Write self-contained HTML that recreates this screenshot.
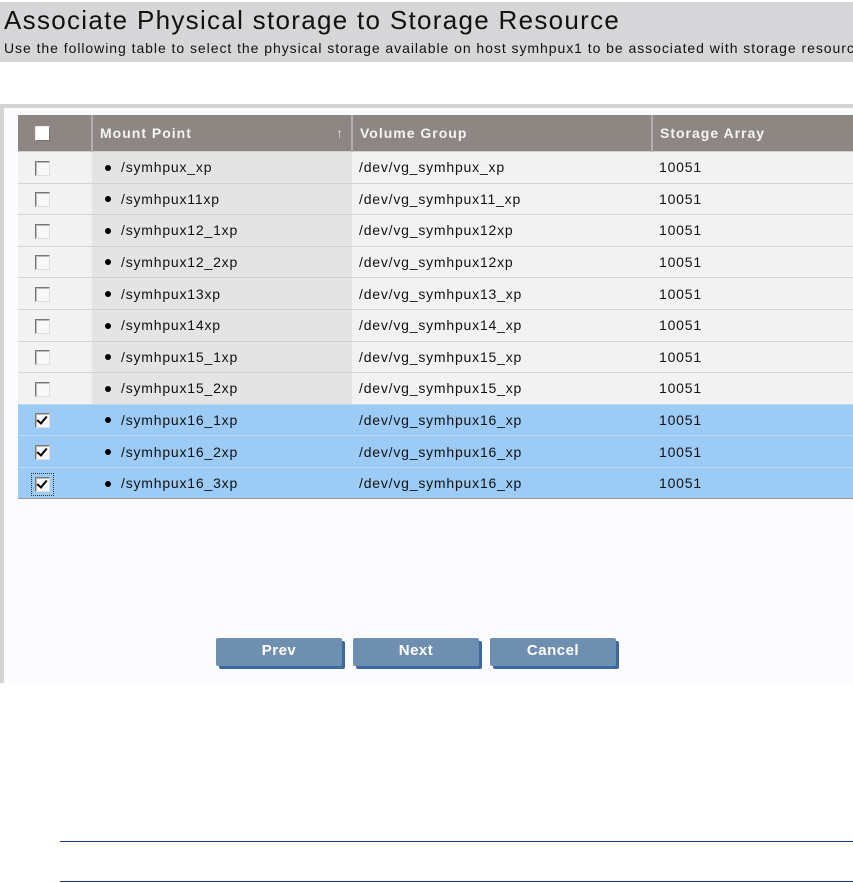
<!DOCTYPE html>
<html><head><style>
body{margin:0;width:853px;height:883px;background:#fff;font-family:"Liberation Sans",Arial,sans-serif;position:relative;overflow:hidden}
.hdr{position:absolute;left:0;top:2px;width:853px;height:60px;background:#d6d6d8;overflow:hidden}
.hdr h1{position:absolute;left:4px;top:3px;margin:0;font-weight:normal;font-size:26px;letter-spacing:1.3px;color:#111;white-space:nowrap}
.hdr p{position:absolute;left:4px;top:38px;margin:0;font-size:14px;letter-spacing:0.95px;color:#111;white-space:nowrap}
.panel{position:absolute;left:0;top:104px;width:853px;height:579px;background:#fcfbfd;border-top:4px solid #d4d4d4;border-left:4px solid #d4d4d4;box-sizing:border-box}
table{position:absolute;left:18px;top:115px;border-collapse:collapse;table-layout:fixed;width:840px;font-size:14px;letter-spacing:0.8px;color:#111}
th{background:#8d8682;color:#f4f4f4;text-align:left;font-size:14px;letter-spacing:1px;height:36px;padding:0 7px;border-left:2px solid #b5b0ad;white-space:nowrap}
th:first-child{border-left:none}
td{height:31.6px;padding:0 7px;border-top:1px solid #d2d2d2;background:#f2f2f2;box-sizing:border-box;white-space:nowrap}
td.m{background:#e4e4e4}
tr.s td{background:#9ccbf5;border-top:1px solid #bcd6ee}
.cb{display:inline-block;width:13px;height:13px;border:1px solid #777;border-right-color:#ddd;border-bottom-color:#ddd;background:#f8f8f8;vertical-align:middle;margin-left:10px;position:relative;box-shadow:inset 1px 1px 0 #bbb}
.cb.k::after{content:"";position:absolute;left:3px;top:0px;width:4px;height:8px;border:solid #000;border-width:0 2px 2px 0;transform:rotate(40deg)}
.dot{display:inline-block;width:6px;height:6px;border-radius:50%;background:#000;margin:0 10px 2px 6px;vertical-align:middle}
.btn{position:absolute;top:638px;width:126px;height:28px;background:#6f8fb0;color:#fff;font-weight:bold;font-size:15px;letter-spacing:0.5px;text-align:center;line-height:26px;box-shadow:3px 3px 0 #3a6aa0;border-radius:2px}
.ln{position:absolute;left:60px;width:793px;height:1px;background:#1a3f8f}
</style></head><body>
<div class="hdr"><h1>Associate Physical storage to Storage Resource</h1><p>Use the following table to select the physical storage available on host symhpux1 to be associated with storage resource</p></div>
<div class="panel"></div>
<table>
<colgroup><col style="width:74px"><col style="width:260px"><col style="width:300px"><col></colgroup>
<tr><th><span class="cb" style="background:#fff;border-color:#eee #777 #777 #eee;box-shadow:none"></span></th><th>Mount Point<span style="float:right;color:#ddd">↑</span></th><th>Volume Group</th><th>Storage Array</th></tr>
<tr><td><span class="cb"></span></td><td class="m"><span class="dot"></span>/symhpux_xp</td><td>/dev/vg_symhpux_xp</td><td>10051</td></tr>
<tr><td><span class="cb"></span></td><td class="m"><span class="dot"></span>/symhpux11xp</td><td>/dev/vg_symhpux11_xp</td><td>10051</td></tr>
<tr><td><span class="cb"></span></td><td class="m"><span class="dot"></span>/symhpux12_1xp</td><td>/dev/vg_symhpux12xp</td><td>10051</td></tr>
<tr><td><span class="cb"></span></td><td class="m"><span class="dot"></span>/symhpux12_2xp</td><td>/dev/vg_symhpux12xp</td><td>10051</td></tr>
<tr><td><span class="cb"></span></td><td class="m"><span class="dot"></span>/symhpux13xp</td><td>/dev/vg_symhpux13_xp</td><td>10051</td></tr>
<tr><td><span class="cb"></span></td><td class="m"><span class="dot"></span>/symhpux14xp</td><td>/dev/vg_symhpux14_xp</td><td>10051</td></tr>
<tr><td><span class="cb"></span></td><td class="m"><span class="dot"></span>/symhpux15_1xp</td><td>/dev/vg_symhpux15_xp</td><td>10051</td></tr>
<tr><td><span class="cb"></span></td><td class="m"><span class="dot"></span>/symhpux15_2xp</td><td>/dev/vg_symhpux15_xp</td><td>10051</td></tr>
<tr class="s"><td><span class="cb k"></span></td><td class="m"><span class="dot"></span>/symhpux16_1xp</td><td>/dev/vg_symhpux16_xp</td><td>10051</td></tr>
<tr class="s"><td><span class="cb k"></span></td><td class="m"><span class="dot"></span>/symhpux16_2xp</td><td>/dev/vg_symhpux16_xp</td><td>10051</td></tr>
<tr class="s"><td><span class="cb k" style="outline:1px dotted #333;outline-offset:3px"></span></td><td class="m"><span class="dot"></span>/symhpux16_3xp</td><td>/dev/vg_symhpux16_xp</td><td>10051</td></tr>
</table>
<div style="position:absolute;left:18px;top:498px;width:835px;height:1px;background:#999"></div>
<div class="btn" style="left:216px">Prev</div>
<div class="btn" style="left:353px">Next</div>
<div class="btn" style="left:490px">Cancel</div>
<div class="ln" style="top:841px"></div>
<div class="ln" style="top:881px"></div>
</body></html>
